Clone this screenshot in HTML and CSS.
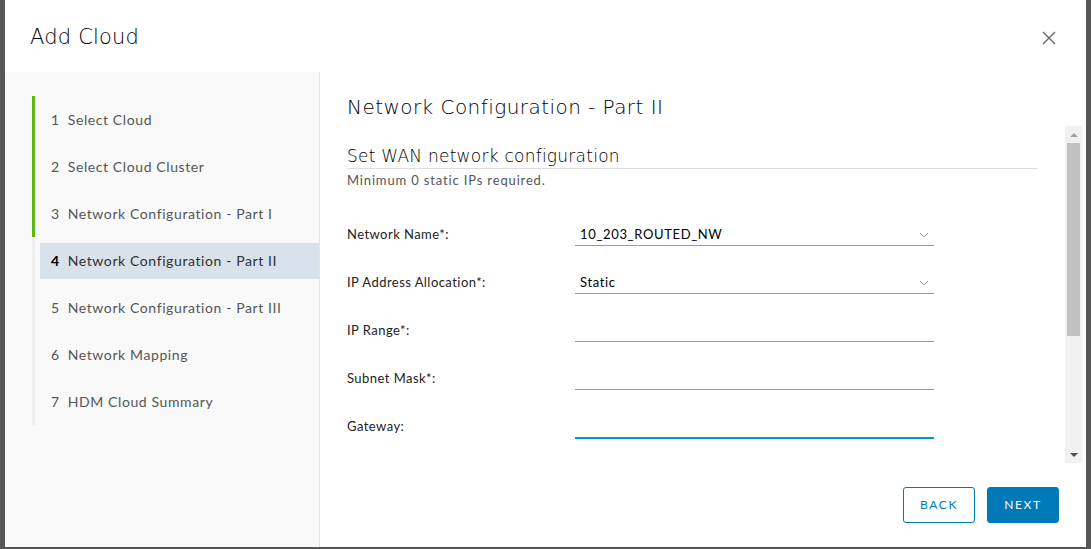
FILE: index.html
```html
<!DOCTYPE html>
<html>
<head>
<meta charset="utf-8">
<link rel="stylesheet" href="styles.css">
</head>
<body>
<div class="modal">
  <div class="modal-header">
    <h1 class="modal-title">Add Cloud</h1>
    <button class="close" aria-label="Close">
      <svg width="16" height="16" viewBox="0 0 16 16"><path d="M2 2 L14 14 M14 2 L2 14" stroke="#666" stroke-width="1.4" fill="none"/></svg>
    </button>
  </div>
  <div class="modal-body">
    <nav class="sidebar">
      <ol class="steps">
        <li class="step done"><span class="step-inner"><span class="num">1</span>Select Cloud</span></li>
        <li class="step done"><span class="step-inner"><span class="num">2</span>Select Cloud Cluster</span></li>
        <li class="step done"><span class="step-inner"><span class="num">3</span>Network Configuration - Part I</span></li>
        <li class="step active"><span class="step-inner"><span class="num">4</span>Network Configuration - Part II</span></li>
        <li class="step"><span class="step-inner"><span class="num">5</span>Network Configuration - Part III</span></li>
        <li class="step"><span class="step-inner"><span class="num">6</span>Network Mapping</span></li>
        <li class="step"><span class="step-inner"><span class="num">7</span>HDM Cloud Summary</span></li>
      </ol>
    </nav>
    <main class="main">
      <h2 class="page-title">Network Configuration - Part II</h2>
      <div class="scroll-area">
        <div class="scroll-content">
          <h3 class="section-title">Set WAN network configuration</h3>
          <p class="section-sub">Minimum 0 static IPs required.</p>
          <form class="form">
            <div class="row">
              <label class="label">Network Name*:</label>
              <div class="control select"><span class="value">10_203_ROUTED_NW</span><svg class="chev" width="10" height="6" viewBox="0 0 10 6"><path d="M1 1 L5 5 L9 1" stroke="#9a9a9a" stroke-width="1" fill="none"/></svg></div>
            </div>
            <div class="row">
              <label class="label">IP Address Allocation*:</label>
              <div class="control select"><span class="value">Static</span><svg class="chev" width="10" height="6" viewBox="0 0 10 6"><path d="M1 1 L5 5 L9 1" stroke="#9a9a9a" stroke-width="1" fill="none"/></svg></div>
            </div>
            <div class="row">
              <label class="label">IP Range*:</label>
              <div class="control"></div>
            </div>
            <div class="row">
              <label class="label">Subnet Mask*:</label>
              <div class="control"></div>
            </div>
            <div class="row">
              <label class="label">Gateway:</label>
              <div class="control focused"></div>
            </div>
          </form>
        </div>
        <div class="scrollbar">
          <span class="arrow up"></span>
          <span class="thumb"></span>
          <span class="track"></span>
          <span class="arrow down"></span>
        </div>
      </div>
      <div class="footer">
        <button class="btn btn-outline">BACK</button>
        <button class="btn btn-primary">NEXT</button>
      </div>
    </main>
  </div>
</div>
</body>
</html>
```

FILE: styles.css
```css
* { box-sizing: border-box; }
html, body { margin: 0; padding: 0; }
body {
  background: #565656;
  font-family: Lato, "Open Sans", sans-serif;
  width: 1091px;
  height: 549px;
  overflow: hidden;
}
.modal {
  margin-left: 5px;
  width: 1081px;
  height: 547px;
  background: #fff;
  display: flex;
  flex-direction: column;
}
.modal-header {
  height: 72px;
  flex: none;
  display: flex;
  align-items: center;
  justify-content: space-between;
  padding: 0 29px 0 25px;
}
.modal-title {
  margin: 0;
  font-family: "DejaVu Sans", sans-serif;
  font-size: 21px;
  font-weight: 200;
  color: #000;
  letter-spacing: 0.2px;
  padding-top: 1px;
}
.close {
  border: 0;
  background: none;
  padding: 0;
  width: 16px;
  height: 16px;
  margin-top: 4px;
  cursor: pointer;
}
.close svg { display: block; }
.modal-body {
  flex: 1;
  display: flex;
  min-height: 0;
}
.sidebar {
  width: 315px;
  flex: none;
  background: #f9f9f9;
  border-right: 1px solid #e4e4e4;
  padding: 24px 0 0 27px;
}
.steps {
  list-style: none;
  margin: 0;
  padding: 0;
}
.step {
  height: 47px;
  border-left: 3px solid #eeeeee;
  padding: 6px 0 5px 5px;
}
.step.done { border-left-color: #60b515; }
.step-inner {
  display: flex;
  align-items: center;
  height: 36px;
  padding-left: 11px;
  padding-bottom: 1px;
  font-size: 14px;
  color: #565656;
  letter-spacing: 0.6px;
}
.num { margin-right: 8px; }
.step.active .step-inner {
  background: #d9e1ea;
  color: #313131;
}
.step.active .num { font-weight: 700; color: #000; }
.main {
  flex: 1;
  display: flex;
  flex-direction: column;
  padding: 0 4px 0 27px;
  min-width: 0;
}
.page-title {
  margin: 0;
  height: 54px;
  padding-top: 22px;
  font-family: "DejaVu Sans", sans-serif;
  font-size: 20px;
  font-weight: 200;
  color: #000;
  letter-spacing: 0.45px;
  line-height: 26px;
}
.scroll-area {
  height: 337px;
  display: flex;
}
.scroll-content {
  flex: 1;
  padding-right: 27px;
  overflow: hidden;
}
.section-title {
  margin: 19px 0 0;
  font-family: "DejaVu Sans", sans-serif;
  font-size: 17px;
  font-weight: 200;
  color: #000;
  line-height: 21px;
  padding-top: 1px;
  padding-bottom: 1px;
  border-bottom: 1px solid #dddddd;
  letter-spacing: 0.25px;
}
.section-sub {
  margin: 3px 0 0;
  font-size: 13px;
  color: #565656;
  line-height: 16px;
  letter-spacing: 0.85px;
}
.form { margin-top: 34px; }
.row {
  display: flex;
  align-items: center;
  height: 24px;
  margin-bottom: 24px;
}
.label {
  width: 228px;
  flex: none;
  font-size: 13px;
  color: #222;
  letter-spacing: 0.45px;
}
.control {
  width: 359px;
  height: 24px;
  border-bottom: 1px solid #9a9a9a;
  display: flex;
  align-items: center;
  justify-content: space-between;
  padding: 1px 5px 0 5px;
  font-size: 13px;
  color: #000;
}
.control .value { letter-spacing: 0.65px; }
.control.focused { border-bottom: 2px solid #0095d3; height: 25px; }
.chev { margin-top: 2px; }
.scrollbar {
  width: 17px;
  flex: none;
  background: #f1f1f1;
  display: flex;
  flex-direction: column;
  align-items: center;
}
.arrow {
  width: 0; height: 0;
  border-left: 4px solid transparent;
  border-right: 4px solid transparent;
}
.arrow.up { border-bottom: 4px solid #a3a3a3; margin: 7px 0 6px; }
.arrow.down { border-top: 4px solid #505050; margin: 6px 0 6px; }
.thumb {
  width: 13px;
  height: 193px;
  background: #c1c1c1;
}
.track { flex: 1; }
.footer {
  flex: 1;
  display: flex;
  justify-content: flex-end;
  align-items: center;
  gap: 12px;
  padding: 0 23px 1px 0;
}
.btn {
  width: 72px;
  height: 36px;
  border-radius: 3px;
  font-family: inherit;
  font-size: 12px;
  letter-spacing: 1.6px;
  font-weight: 400;
  cursor: pointer;
  padding: 0;
}
.btn-outline {
  background: #fff;
  border: 1px solid #0079b8;
  color: #0079b8;
}
.btn-primary {
  background: #0079b8;
  border: 1px solid #0079b8;
  color: #fff;
}
```
